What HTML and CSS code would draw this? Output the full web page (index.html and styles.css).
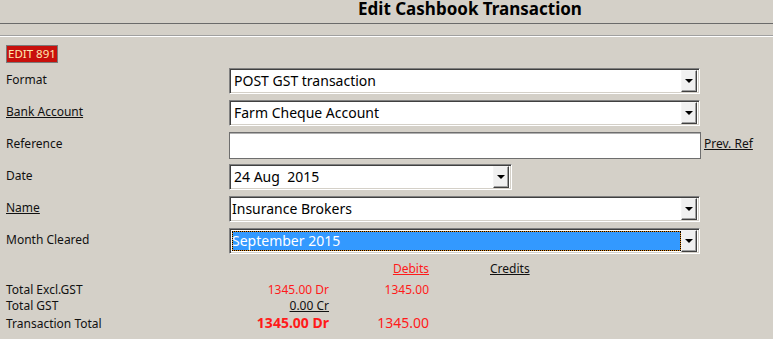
FILE: index.html
```html
<!DOCTYPE html>
<html lang="en">

<head>
    <meta charset="utf-8">
    <title>Edit Cashbook Transaction</title>
    <link rel="stylesheet" href="styles.css">
</head>

<body>
    <header class="top">
        <h1 class="title">Edit Cashbook Transaction</h1>
    </header>
    <div class="groove"></div>

    <main class="form">
        <div class="badge">EDIT 891</div>

        <div class="rows">
            <div class="row">
                <span class="label">Format</span>
                <div class="select wide">
                    <span class="value">POST GST transaction</span>
                    <span class="drop"></span>
                </div>
            </div>
            <div class="row">
                <a class="label link">Bank Account</a>
                <div class="select wide">
                    <span class="value">Farm Cheque Account</span>
                    <span class="drop"></span>
                </div>
            </div>
            <div class="row">
                <span class="label">Reference</span>
                <div class="textbox"></div>
                <a class="prev link">Prev. Ref</a>
            </div>
            <div class="row">
                <span class="label">Date</span>
                <div class="select short">
                    <span class="value">24 Aug&nbsp; 2015</span>
                    <span class="drop"></span>
                </div>
            </div>
            <div class="row">
                <a class="label link">Name</a>
                <div class="select wide">
                    <span class="value tight">Insurance Brokers</span>
                    <span class="drop"></span>
                </div>
            </div>
            <div class="row">
                <span class="label">Month Cleared</span>
                <div class="select wide focused">
                    <span class="value tight">September 2015</span>
                    <span class="drop"></span>
                </div>
            </div>
        </div>

        <div class="totals">
            <span></span>
            <span></span>
            <a class="amt red link">Debits</a>
            <a class="credits link">Credits</a>

            <span class="label">Total Excl.GST</span>
            <span class="amt red">1345.00 Dr</span>
            <span class="amt red">1345.00</span>
            <span></span>

            <span class="label">Total GST</span>
            <span class="amt"><u>0.00 Cr</u></span>
            <span></span>
            <span></span>

            <span class="label">Transaction Total</span>
            <span class="amt red big bold">1345.00 Dr</span>
            <span class="amt red big">1345.00</span>
            <span></span>
        </div>
    </main>
</body>

</html>
```

FILE: styles.css
```css
body {
    margin: 0;
    background-color: #d4d0c8;
    font-family: "Noto Sans", "Open Sans", sans-serif;
    font-size: 12px;
    color: #111;
}

.top {
    height: 23px;
    border-bottom: 1px solid #6a6a6a;
}

.title {
    margin: 0;
    padding-left: 167px;
    text-align: center;
    font-size: 17px;
    line-height: 17px;
    font-weight: bold;
    color: #000;
}

.groove {
    margin-top: 11px;
    border-top: 1px solid #a0a0a0;
    border-bottom: 1px solid #fff;
}

.form {
    padding: 8px 0 0 6px;
}

.badge {
    display: inline-block;
    background-color: #c8100c;
    border: 1px solid #7a7a7a;
    color: #ffe8b0;
    font-size: 11.5px;
    line-height: 16px;
    padding: 0 1px;
}

.rows {
    margin-top: 5px;
    display: flex;
    flex-direction: column;
    gap: 6px;
}

.row {
    display: flex;
    align-items: center;
    height: 26px;
}

.label {
    width: 223px;
    flex-shrink: 0;
    margin-top: -3px;
}

.link {
    text-decoration: underline;
    color: #111;
}

.select {
    display: flex;
    align-items: center;
    height: 26px;
    box-sizing: border-box;
    background-color: #fff;
    border: 1px solid;
    border-color: #808080 #fff #fff #808080;
    box-shadow: inset 1px 1px #404040, inset -1px -1px #d4d0c8;
    padding: 2px;
}

.wide {
    width: 471px;
}

.short {
    width: 283px;
}

.value {
    flex: 1;
    font-size: 14px;
    line-height: 20px;
    padding-left: 2px;
    color: #000;
    white-space: nowrap;
}

.value.tight {
    padding-left: 0;
}

.focused .value {
    background-color: #3399ff;
    color: #fff;
    outline: 1px dotted #000;
    outline-offset: -1px;
    box-shadow: inset 0 0 0 1px #e08a1c;
}

.drop {
    width: 16px;
    height: 22px;
    box-sizing: border-box;
    background-color: #f0f0f0;
    border: 1px solid;
    border-color: #f4f4f4 #404040 #404040 #f4f4f4;
    box-shadow: inset -1px -1px #a0a0a0;
    display: flex;
    align-items: center;
    justify-content: center;
}

.drop::after {
    content: "";
    border-left: 4px solid transparent;
    border-right: 4px solid transparent;
    border-top: 4px solid #000;
}

.textbox {
    width: 472px;
    height: 27px;
    box-sizing: border-box;
    background-color: #fff;
    border: 1px solid #6e6e6e;
    box-shadow: inset 0 1px #b0b0b0;
}

.prev {
    margin-left: 3px;
    margin-top: -3px;
}

.totals {
    margin-top: 7px;
    display: grid;
    grid-template-columns: 200px 123px 100px 200px;
    grid-template-rows: 16px 21px 16px 18px;
    align-items: end;
    line-height: 16px;
}

.totals .label {
    width: auto;
    margin-top: 0;
}

.amt {
    text-align: right;
}

.red {
    color: #ff1a1a;
}

.credits {
    padding-left: 61px;
}

.big {
    font-size: 14px;
    line-height: 18px;
}

.bold {
    font-weight: bold;
}

.totals u {
    text-decoration: underline;
}
```
